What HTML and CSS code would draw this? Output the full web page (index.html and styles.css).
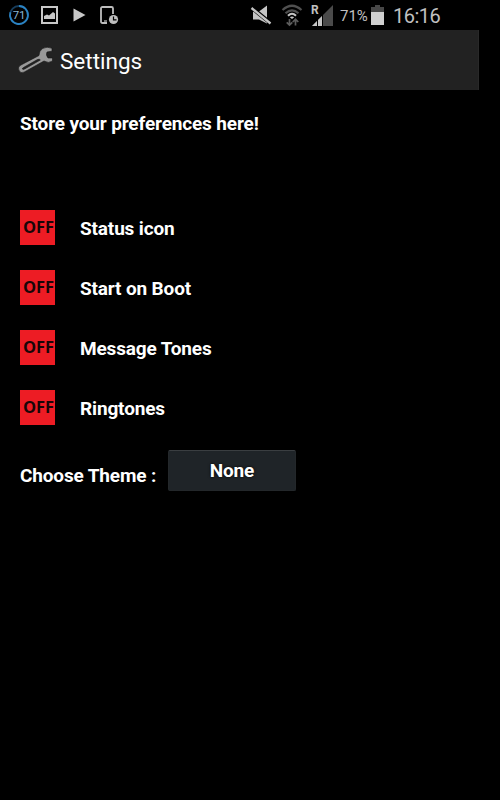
FILE: index.html
```
<!DOCTYPE html>
<html lang="en">

<head>
    <meta charset="UTF-8" />
    <meta name="viewport" content="width=device-width, initial-scale=1.0" />
    <title>Settings</title>
    <link rel="stylesheet" href="styles.css">
</head>

<body>
    <div class="status-bar">
        <div class="notifications">
            <div class="battery-ring">
                <svg class="ring" width="22" height="22" viewBox="0 0 22 22" fill="none">
                    <circle cx="11" cy="11" r="9" stroke="#173d5c" stroke-width="1.8" />
                    <path d="M11 2A9 9 0 1 1 2.4 8.2" stroke="#2b83c3" stroke-width="1.8" />
                </svg>
                <span>71</span>
            </div>
            <svg class="picture" width="17" height="18" viewBox="0 0 17 18">
                <path fill="#c8c8c8" fill-rule="evenodd" d="M0 0h17v18H0zM2 2v14h13V2z" />
                <path fill="#c8c8c8" d="M3 13V10l3-1.5 2 1L12 6l2 1.5V13z" />
            </svg>
            <svg class="play" width="13" height="14" viewBox="0 0 13 14">
                <path fill="#c8c8c8" d="M0.500 0.500L12.500 7 0.500 13.500z" />
            </svg>
            <svg class="phone-clock" width="19" height="19" viewBox="0 0 19 19" fill="none">
                <path stroke="#bdbdbd" stroke-width="1.8" d="M7 17H2.500Q1 17 1 15.500V2.500Q1 1 2.500 1h9Q13 1 13 2.500V8" />
                <path stroke="#bdbdbd" stroke-width="1.2" d="M4 15h3" />
                <circle cx="13.500" cy="13.500" r="4.600" fill="#bdbdbd" />
                <path stroke="#000" stroke-width="1.2" d="M13.500 10.500v3.300h3" />
            </svg>
        </div>
        <div class="system">
            <svg class="mute" width="22" height="21" viewBox="0 0 22 21">
                <path fill="#c5c5c5" d="M3 6.500h6L17 0.500V18.500L9 14.500H3z" />
                <path stroke="#000" stroke-width="4" d="M1 2.200L21 18.500" />
                <path stroke="#c5c5c5" stroke-width="2.300" d="M1.500 3L20.500 18.500" />
            </svg>
            <svg class="wifi" width="22" height="23" viewBox="0 0 22 23" fill="none">
                <path stroke="#505050" stroke-width="2.200" d="M1.500 6Q11-2.500 20.500 6" />
                <path stroke="#505050" stroke-width="2.200" d="M4.500 9.300Q11 3.300 17.500 9.300" />
                <path stroke="#c5c5c5" stroke-width="2" d="M7 11.800Q11 7.800 15 11.800" />
                <path fill="#c5c5c5" d="M8.800 13.300Q11 11.700 13.200 13.300L11 15z" />
                <path stroke="#5c5c5c" stroke-width="1.700" d="M8.500 15v6M5.700 18.300l2.800 2.800 2.800-2.800M14.500 21.500v-6M11.700 18l2.800-2.800 2.800 2.800" />
            </svg>
            <div class="signal">
                <svg width="21" height="22" viewBox="0 0 21 22">
                    <path fill="#4a4a4a" d="M21 0v21H0z" />
                    <path fill="#c5c5c5" d="M10 11v10H0z" />
                    <path stroke="#000" stroke-width="1" d="M5.500 14v7M10.500 9v12" />
                </svg>
                <span>R</span>
            </div>
            <span class="percent">71%</span>
            <svg class="battery" width="13" height="20" viewBox="0 0 13 20">
                <path fill="#484848" d="M4 0h5v2h4v6H0V2h4z" />
                <path fill="#d0d0d0" d="M0 7h13v13H0z" />
            </svg>
            <span class="clock">16:16</span>
        </div>
    </div>

    <div class="title-bar">
        <svg class="wrench" width="36" height="28" viewBox="0 0 36 28">
            <path fill="#999" stroke="#111" stroke-width="0.6" fill-rule="evenodd" d="M34 2.300Q29 0 24.500 2.500Q21 5 21 9.500L2 19.500Q-0.500 21.500 1 24.500Q2.700 27.800 6 26.200L26 15Q30.500 17.800 34.500 15L34.500 12L30 12Q27.500 9 29 6L34 5.200zM5.500 21.500L19.500 13.500Q21.800 12.800 22.300 14L7 22.800Q4.800 24 4.300 22.800Q4.300 22.200 5.500 21.500z" />
        </svg>
        <h1>Settings</h1>
    </div>

    <div class="content">
        <p class="intro">Store your preferences here!</p>
        <div class="option">
            <div class="toggle">OFF</div>
            <span>Status icon</span>
        </div>
        <div class="option">
            <div class="toggle">OFF</div>
            <span>Start on Boot</span>
        </div>
        <div class="option">
            <div class="toggle">OFF</div>
            <span>Message Tones</span>
        </div>
        <div class="option">
            <div class="toggle">OFF</div>
            <span>Ringtones</span>
        </div>
        <div class="theme">
            <span class="theme-label">Choose Theme :</span>
            <button type="button">None</button>
        </div>
    </div>

    <script>
        // toggle buttons
        document.querySelectorAll('.toggle').forEach(toggle => {
            toggle.addEventListener('click', () => {
                const on = toggle.classList.toggle('on');
                toggle.textContent = on ? 'ON' : 'OFF';
            });
        });
    </script>
</body>

</html>
```
FILE: styles.css
```
* {
    margin: 0;
    padding: 0;
    box-sizing: border-box;
}

body {
    font-family: Roboto, "Liberation Sans", sans-serif;
    background: #000;
    color: #fff;
    height: 100vh;
    overflow: hidden;
}

svg {
    display: block;
    flex: none;
}

/* status bar */
.status-bar {
    display: flex;
    justify-content: space-between;
    height: 30px;
    padding: 0 60px 0 8px;
    color: #c0c0c0;
}

.notifications,
.system {
    display: flex;
    align-items: flex-start;
}

.battery-ring {
    position: relative;
    width: 22px;
    height: 22px;
    margin-top: 4px;
}

.battery-ring span {
    position: absolute;
    inset: 0;
    font-size: 11.5px;
    line-height: 23px;
    text-align: center;
    letter-spacing: -0.3px;
    color: #88b4d4;
}

.picture {
    margin: 6px 0 0 11px;
}

.play {
    margin: 8px 0 0 15px;
}

.phone-clock {
    margin: 6px 0 0 14px;
}

.mute {
    margin: 5px 9px 0 0;
}

.wifi {
    margin: 4px 9px 0 0;
}

.signal {
    position: relative;
    margin: 5px 7px 0 0;
}

.signal span {
    position: absolute;
    top: -1px;
    left: -1px;
    font-size: 12px;
    font-weight: bold;
    line-height: 12px;
}

.percent {
    width: 28px;
    margin-right: 3px;
    font-size: 15px;
    line-height: 32px;
    white-space: nowrap;
}

.battery {
    margin: 5px 9px 0 0;
}

.clock {
    width: 47px;
    font-size: 20px;
    line-height: 33px;
    letter-spacing: -0.5px;
    white-space: nowrap;
}

/* title bar */
.title-bar {
    display: flex;
    align-items: center;
    width: 479px;
    height: 60px;
    padding-left: 18px;
    background: #222;
    border-right: 1px solid #292929;
}

.title-bar h1 {
    margin: 1px 0 0 6px;
    font-size: 22.5px;
    font-weight: normal;
}

/* preferences */
.content {
    padding: 20px 20px 0;
    font-size: 19px;
    font-weight: bold;
    letter-spacing: -0.15px;
}

.intro {
    height: 100px;
    line-height: 28px;
}

.option {
    display: flex;
    height: 35px;
    margin-bottom: 25px;
    line-height: 37px;
}

.toggle {
    width: 35px;
    height: 35px;
    margin-right: 25px;
    padding-left: 3px;
    background: #ed1c24;
    color: #190608;
    font-family: "Open Sans", sans-serif;
    font-size: 16.5px;
    line-height: 34px;
    cursor: pointer;
}

.toggle.on {
    background: #22b14c;
}

.theme {
    display: flex;
}

.theme-label {
    width: 148px;
    line-height: 52px;
}

.theme button {
    width: 128px;
    height: 41px;
    border: 1px solid #23272a;
    border-top-color: #3a3e41;
    border-radius: 2px;
    background: #1f2428;
    color: #fff;
    font: inherit;
    letter-spacing: inherit;
    text-shadow: 0 0 3px #000;
    cursor: pointer;
}
```
